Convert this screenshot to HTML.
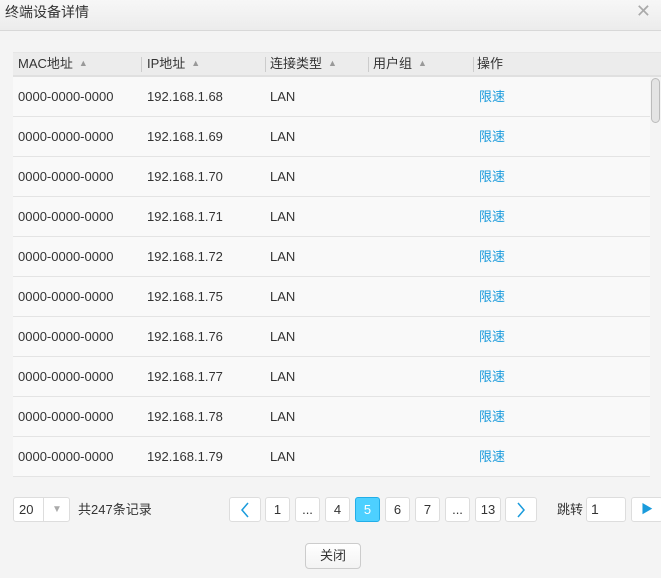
<!DOCTYPE html><html><head><meta charset="utf-8"><style>
*{box-sizing:border-box;margin:0;padding:0}
body{width:661px;height:578px;background:#f4f4f4;font-family:"Liberation Sans","Noto Sans CJK SC",sans-serif;font-size:13px;color:#333;position:relative;overflow:hidden;line-height:16px}
.title{position:absolute;left:0;top:0;width:661px;height:31px;background:linear-gradient(#f7f7f7,#ececec);border-bottom:1px solid #d8d8d8;font-size:14px;line-height:16px;padding:4px 0 0 5px;color:#333}
.x{position:absolute;right:10px;top:2px;font-size:18px;color:#aaa;line-height:18px}
.hdr{position:absolute;left:13px;top:52px;width:648px;height:25px;background:#ececec;border-bottom:2px solid #e0e0e0;border-top:1px solid #e6e6e6}
.c{position:absolute;white-space:nowrap;line-height:16px;height:16px}
.hdr .c{top:3px}
.sep{position:absolute;top:4px;width:1px;height:15px;background:#ccc}
.tri{color:#999;font-size:9px;margin-left:6px;position:relative;top:-2px}
.row{position:absolute;left:13px;width:637px;height:40px;background:#f9f9f9;border-bottom:1px solid #e4e4e4}
.row .c{top:12px}
.lnk{color:#1a9bdc}
.sb{position:absolute;left:651px;top:78px;width:9px;height:45px;border:1px solid #bbb;border-radius:5px;background:#e4e4e4}
.b{position:absolute;top:497px;height:25px;background:#fff;border:1px solid #ddd;border-radius:3px;text-align:center;line-height:23px;font-size:13px}
</style></head><body>
<div class="title">终端设备详情<span class="x">✕</span></div>
<div class="hdr">
<span class="c" style="left:5px">MAC地址<span class="tri">▲</span></span>
<span class="sep" style="left:128px"></span><span class="c" style="left:134px">IP地址<span class="tri">▲</span></span>
<span class="sep" style="left:252px"></span><span class="c" style="left:257px">连接类型<span class="tri">▲</span></span>
<span class="sep" style="left:355px"></span><span class="c" style="left:360px">用户组<span class="tri">▲</span></span>
<span class="sep" style="left:460px"></span><span class="c" style="left:464px">操作</span>
</div>
<div class="row" style="top:77px"><span class="c" style="left:5px">0000-0000-0000</span><span class="c" style="left:134px">192.168.1.68</span><span class="c" style="left:257px">LAN</span><span class="c lnk" style="left:466px">限速</span></div>
<div class="row" style="top:117px"><span class="c" style="left:5px">0000-0000-0000</span><span class="c" style="left:134px">192.168.1.69</span><span class="c" style="left:257px">LAN</span><span class="c lnk" style="left:466px">限速</span></div>
<div class="row" style="top:157px"><span class="c" style="left:5px">0000-0000-0000</span><span class="c" style="left:134px">192.168.1.70</span><span class="c" style="left:257px">LAN</span><span class="c lnk" style="left:466px">限速</span></div>
<div class="row" style="top:197px"><span class="c" style="left:5px">0000-0000-0000</span><span class="c" style="left:134px">192.168.1.71</span><span class="c" style="left:257px">LAN</span><span class="c lnk" style="left:466px">限速</span></div>
<div class="row" style="top:237px"><span class="c" style="left:5px">0000-0000-0000</span><span class="c" style="left:134px">192.168.1.72</span><span class="c" style="left:257px">LAN</span><span class="c lnk" style="left:466px">限速</span></div>
<div class="row" style="top:277px"><span class="c" style="left:5px">0000-0000-0000</span><span class="c" style="left:134px">192.168.1.75</span><span class="c" style="left:257px">LAN</span><span class="c lnk" style="left:466px">限速</span></div>
<div class="row" style="top:317px"><span class="c" style="left:5px">0000-0000-0000</span><span class="c" style="left:134px">192.168.1.76</span><span class="c" style="left:257px">LAN</span><span class="c lnk" style="left:466px">限速</span></div>
<div class="row" style="top:357px"><span class="c" style="left:5px">0000-0000-0000</span><span class="c" style="left:134px">192.168.1.77</span><span class="c" style="left:257px">LAN</span><span class="c lnk" style="left:466px">限速</span></div>
<div class="row" style="top:397px"><span class="c" style="left:5px">0000-0000-0000</span><span class="c" style="left:134px">192.168.1.78</span><span class="c" style="left:257px">LAN</span><span class="c lnk" style="left:466px">限速</span></div>
<div class="row" style="top:437px"><span class="c" style="left:5px">0000-0000-0000</span><span class="c" style="left:134px">192.168.1.79</span><span class="c" style="left:257px">LAN</span><span class="c lnk" style="left:466px">限速</span></div>
<div class="sb"></div>
<div class="b" style="left:13px;width:57px;text-align:left;padding-left:5px">20<span style="position:absolute;left:29px;top:0;height:23px;border-left:1px solid #ddd;width:27px;text-align:center;color:#aaa;font-size:10px">▼</span></div>
<span class="c" style="left:78px;top:502px">共247条记录</span>
<div class="b" style="left:229px;width:32px"><svg width="10" height="16" viewBox="0 0 10 16" style="margin-top:4px"><path d="M8 1L2 8l6 7" stroke="#1a9bdc" stroke-width="1.5" fill="none"/></svg></div>
<div class="b" style="left:265px;width:25px">1</div>
<div class="b" style="left:295px;width:25px">...</div>
<div class="b" style="left:325px;width:25px">4</div>
<div class="b" style="left:355px;width:25px;background:#4dd0ff;border-color:#22aee8;color:#fff">5</div>
<div class="b" style="left:385px;width:25px">6</div>
<div class="b" style="left:415px;width:25px">7</div>
<div class="b" style="left:445px;width:25px">...</div>
<div class="b" style="left:475px;width:26px">13</div>
<div class="b" style="left:505px;width:32px"><svg width="10" height="16" viewBox="0 0 10 16" style="margin-top:4px"><path d="M2 1l6 7-6 7" stroke="#1a9bdc" stroke-width="1.5" fill="none"/></svg></div>
<span class="c" style="left:557px;top:502px">跳转</span>
<div class="b" style="left:586px;width:40px;text-align:left;padding-left:4px;font-size:14px">1</div>
<div class="b" style="left:631px;width:32px;color:#1a9bdc;font-size:12px">▶</div>
<div class="b" style="left:305px;top:543px;width:56px;height:26px;border-color:#ccc;border-radius:4px;background:linear-gradient(#fff,#f3f3f3);line-height:24px">关闭</div>
</body></html>
